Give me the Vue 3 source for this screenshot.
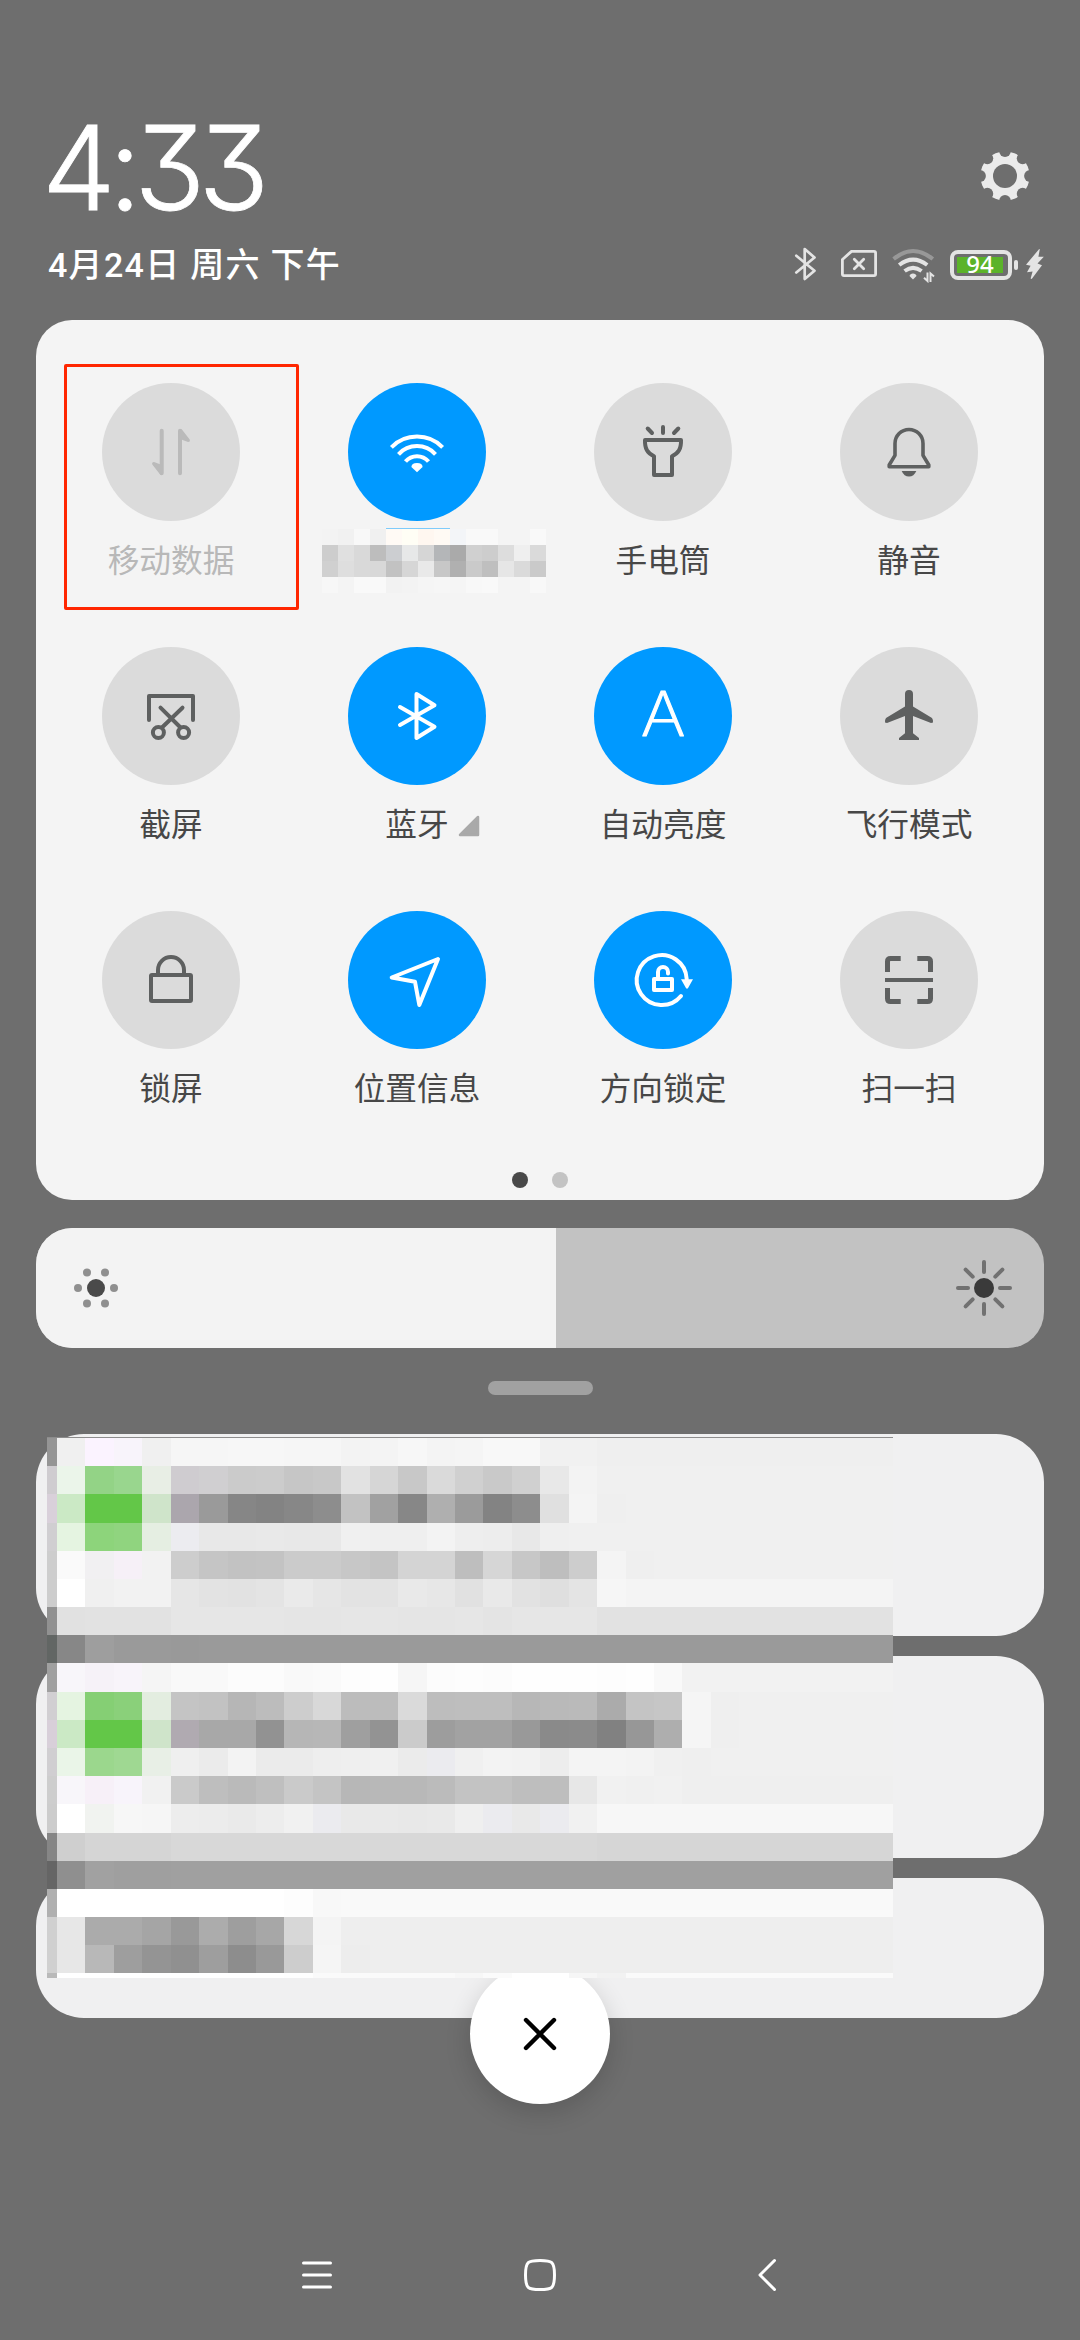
<script setup>
const tiles = [
  { id: 'data', label: '移动数据', state: 'disabled' },
  { id: 'wifi', label: '', state: 'on' },
  { id: 'torch', label: '手电筒', state: 'off' },
  { id: 'mute', label: '静音', state: 'off' },
  { id: 'shot', label: '截屏', state: 'off' },
  { id: 'bt', label: '蓝牙', state: 'on', more: true },
  { id: 'auto', label: '自动亮度', state: 'on' },
  { id: 'plane', label: '飞行模式', state: 'off' },
  { id: 'lock', label: '锁屏', state: 'off' },
  { id: 'loc', label: '位置信息', state: 'on' },
  { id: 'rotate', label: '方向锁定', state: 'on' },
  { id: 'scan', label: '扫一扫', state: 'off' },
]

// Two hex digits stand for a grey, six for a full colour.
const hue = (c) => '#' + (c.length === 2 ? c + c + c : c)

const nameRows = [
  'f3 f1 f8 f0 fffaf5 fffef5 fff7f0 fffaf4 f3f5f8 f9 f9 f4 f4 f9',
  'cd e0 d9 bd ccced1 e7e8e8 d6 b4b6b8 aa d0 cd dd ef da',
  'd0 de d9 d8 c2 d6 e9 c7 b0 ca bf e6 da ca',
  'f7 f4 f9 f9 f2 f3 f5 f6 f5 f8 f9 f4 f4 f8',
].map((r) => r.split(' ').map(hue))
const nameCells = nameRows.flatMap((r, y) => r.map((c, x) => ({ x: x * 16, y: 1 + y * 16, c })))

// First value of each row is the narrow left edge; the last one fills to the right.
const noteRows = [
  '95 f0 fbf3ff f8f4fb f0 f6 f6 f7 f7 f6 f6 f3 f4 f7 f4 f5 f8 f8 f1 f1 ef',
  'cfccd0 ebf5ea 93d386 99d68e e8eee5 cfccd0 d0cfd1 cb cc c6 c8 e2 d6 c8 da d0 c9 d0 e8 f3 f0',
  'd9d0da cbe9c5 63c748 63c748 cfe4ca aba6ad 9a 86 83 87 8d c2 a1 87 af 9b 83 8d e0 f4 ef f0',
  'd0ced1 e5f4e1 8dd47b 90d47f e5eee2 ececf0 e8 e8 e9 e8 e8 f0 ef ef f3 ee ed e8 ef f0',
  'cd fa f1f0f2 f6f0f7 f2 cd c5 c2 c3 cb cb c7 c4 d4 d4 be d6 c7 be cd f4 ef f0',
  'cd ff f0 f2 f2 e6 e3 e2 e4 ea e6 e3 e3 e9 e7 e1 e9 e2 df e4 f6 f4',
  '91 e1 e2 e2 e2 e6 e6 e6 e6 e5 e5 e6 e6 e5 e5 e6 e4 e6 e6 e6 e2',
  '626664 87 9e 9a 9a 99 9a',
  'a0 f8f6fa f6f2f8 f8f4fa f5 f9 f9 fc fc f9 fa fd fe f6 fc fd fc fe fe fe fd fe f9 f2',
  'd1cfd2 e5f4e1 85cf74 8ad07a e3ede0 c4 c2 b6 bc cd d8 bc bc da bd be be b7 b9 ba ab c4 c6 f5 ef f0',
  'd8cfd9 cbe9c5 63c748 63c748 cfe4ca b0aab1 a8 a8 92 b6 b7 9f 93 cb 9d a2 a2 99 8a 8b 81 97 ae f5 ef f0',
  'd0ced1 eaf5e8 9bd78d 9fd892 e8efe6 ef eb f3 eb eb ee ef f0 eb ebebef f0 f3 f2 ed f4 f4 f3 f0 ef f0',
  'cd f8f6fa f7f0f8 f8f4fb f1 ca be ba bf ca c4 b7 b8 b8 bb c3 c3 be be e7 f1 f0 f1 ef',
  'cc ff f1f3f0 f7 f6 ed ec ea ed f1 ebebef e9 e9 e8 e9 ef ebebef e9 ebebef f1 f7',
  '86 cf d5 d5 d5 d8 d8 d8 d8 d8 d8 d8 d8 d8 d8 d8 d8 d8 d8 d8 d6',
  '65 8f a1 9f 9f a0',
  'b0 ff ff ff ff ff ff ff ff fd f8 f9',
  'd0 e7 ab ab a5 99 ac 9e a7 d7 f4 ee',
  'd0 e7 b8 9e 94 90 9e 8d 99 cd f5 ed ee',
  'b9 ff ff ff ff ff ff ff ff fe fa fa fa fa fa f7 fb ff ff f6 f2 fa',
].map((r) => r.split(' ').map(hue))
const colX = (i) => (i === 0 ? 0 : Math.round(10 + (i - 1) * 28.43))
const rowY = (i) => (i === 20 ? 541 : Math.round(1 + i * 28.18))
const noteCells = noteRows.flatMap((r, y) =>
  r.map((c, x) => ({
    x: colX(x),
    y: rowY(y),
    w: (x === r.length - 1 ? 846 : colX(x + 1)) - colX(x),
    h: rowY(y + 1) - rowY(y),
    c,
  })),
)
const turns = [0, 45, 90, 135, 180, 225, 270, 315]
</script>

<template>
  <main class="shade">
    <header class="head">
      <div class="head-row">
        <div class="clock">4:33</div>
        <svg class="gear" viewBox="-25 -25 50 50">
          <mask id="gear-cut">
            <rect x="-25" y="-25" width="50" height="50" fill="#fff" />
            <circle r="12" fill="#000" />
            <circle v-for="t in turns" :key="t" cy="-25" r="5.9" fill="#000" :transform="`rotate(${t})`" />
          </mask>
          <circle r="24.6" fill="#ebebeb" mask="url(#gear-cut)" />
        </svg>
      </div>
      <div class="head-row second">
        <div class="date">4月24日 周六 下午</div>
        <div class="status">
          <svg width="24" height="36" viewBox="0 0 24 36" fill="none" stroke="#e4e4e4" stroke-width="2.7" stroke-linejoin="round" stroke-linecap="round">
            <path d="M3.3 8.7 21.5 23.7 11.7 32V2L21.5 10.5 3.3 25.5" />
          </svg>
          <svg class="sim" width="36" height="36" viewBox="0 0 36 36" fill="none" stroke="#e4e4e4" stroke-width="2.8" stroke-linejoin="round" stroke-linecap="round">
            <path d="M10.5 4.4H33Q34.6 4.4 34.6 6V27Q34.6 28.6 33 28.6H3Q1.4 28.6 1.4 27V12.5Z" />
            <path d="M13.3 12.3 22.7 21.7M22.7 12.3 13.3 21.7" />
          </svg>
          <svg class="net" width="43" height="36" viewBox="0 0 43 36" fill="none" stroke="#e4e4e4" stroke-width="4">
            <path d="M1.6 12Q21 -4 40.8 12" stroke="#989898" />
            <path d="M7.2 18Q21 7.2 35.2 18" />
            <path d="M12.6 24Q21 17.8 29.6 24" />
            <path d="M17.5 29Q18 26.5 21 26.5T24.5 29L21 32.5Z" fill="#e4e4e4" stroke="none" />
            <path d="M35.5 25.5V34L32 30.8M38.5 35V26.5L42 29.5" stroke-width="2" />
          </svg>
          <div class="battery">
            <div class="cell">94</div>
          </div>
          <div class="nub"></div>
          <svg class="bolt" width="20" height="36" viewBox="0 0 20 36" fill="#e4e4e4">
            <path d="M14.2 2 1 17.7 5.6 18.7 2 25.3 7.6 24.4 5.6 31.6 6.7 32 17 18.3 12.5 16.5 18.8 9.7 13.4 9.7 14.8 2.3Z" />
          </svg>
        </div>
      </div>
    </header>

    <section class="panel">
      <div class="grid">
        <div v-for="t in tiles" :key="t.id" class="tile" :class="t.state">
          <div class="disc">
            <svg class="icon" viewBox="-30 -30 60 60">
              <template v-if="t.id === 'data'">
                <path d="M-9.3 -21.3V21.3M9 -21.3V21.3" />
                <path class="solid" d="M-10.5 23 -18.7 12.5Q-19.5 10 -17 10L-9 13V21ZM10.5 -23 18.7 -12.5Q19.5 -10 17 -10L9 -13V-21Z" />
              </template>
              <template v-else-if="t.id === 'wifi'">
                <path class="butt" d="M-25.6 -4.7A36 36 0 0 1 25.6 -4.7M-18.5 2.3A25 25 0 0 1 18.5 2.3M-11.5 9.5A15 15 0 0 1 11.5 9.5" />
                <path class="solid" d="M-5.6 15Q-5.5 11 0 11T5.6 15L0 20.3Z" />
              </template>
              <template v-else-if="t.id === 'torch'">
                <path d="M-18 -12H18C18.3 -3 15.5 1 9 4.3V23H-9V4.3C-15.5 1 -18.3 -3 -18 -12ZM0 -25V-19M-15.3 -23.5 -11 -19M15.3 -23.5 11 -19" />
              </template>
              <template v-else-if="t.id === 'mute'">
                <path class="thin" d="M-14 -8.5A14 14 0 0 1 14 -8.5V3.3L19.8 13V14.7H-19.8V13L-14 3.3Z" />
                <path class="solid" d="M-7.3 19H7.3Q5 24.6 0 24.6T-7.3 19Z" />
              </template>
              <template v-else-if="t.id === 'shot'">
                <path d="M-22 4V-20H22V4M-10.5 -8.3 9 11M11.5 -8.3 -8.5 11" />
                <circle cx="-12.6" cy="16.5" r="5.5" />
                <circle cx="12.6" cy="16.5" r="5.5" />
              </template>
              <template v-else-if="t.id === 'bt'">
                <path d="M-17 -9 17.5 10.7 -.5 22V-22L17.5 -10.7 -17 9" />
              </template>
              <template v-else-if="t.id === 'auto'">
                <text class="letter" x="0" y="20" text-anchor="middle" transform="scale(1.1 1)">A</text>
              </template>
              <template v-else-if="t.id === 'plane'">
                <path class="solid" d="M-4 -22A4 4 0 0 1 4 -22V-9.5L23 2Q24.3 3.5 24 6.5L22 7 4 0V17.3L10 22V24H-10V22L-4 17.3V0L-22 7 -24 6.5Q-24.3 3.5 -23 2L-4 -9.5Z" />
              </template>
              <template v-else-if="t.id === 'lock'">
                <rect x="-20" y="-5" width="40" height="26" rx="1" />
                <path class="butt" d="M-13 -6V-10A13 13 0 0 1 13 -10V-6" />
              </template>
              <template v-else-if="t.id === 'loc'">
                <path d="M21 -21 -25.3 -2.5 -2 1.8 2.3 25Z" />
              </template>
              <template v-else-if="t.id === 'rotate'">
                <path d="M18 16A25 25 0 1 1 23.7 -1M-9 -1H9V10H-9ZM-5 -2V-8A5 5 0 0 1 5 -8V-6.5" />
                <path class="solid" d="M18 -.8H30L24.8 8.6H23.2Z" />
              </template>
              <template v-else>
                <path class="corners" d="M-21.5 -8V-18.5Q-21.5 -21.5 -18.5 -21.5H-8.3M8.3 -21.5H18.5Q21.5 -21.5 21.5 -18.5V-8M21.5 8V18.5Q21.5 21.5 18.5 21.5H8.3M-8.3 21.5H-18.5Q-21.5 21.5 -21.5 18.5V8" />
                <path class="butt" d="M-24 0H24" />
              </template>
            </svg>
          </div>
          <svg v-if="t.id === 'wifi'" class="masked-name" width="224" height="65" shape-rendering="crispEdges">
            <path d="M64 0H128V1H64Z" fill="#7ecbfb" />
            <rect v-for="(c, i) in nameCells" :key="i" :x="c.x" :y="c.y" width="16" height="16" :fill="c.c" />
          </svg>
          <div v-else class="label">
            {{ t.label }}
            <svg v-if="t.more" class="more" width="22" height="22" viewBox="0 0 22 22">
              <path d="M2 20 20 2V20Z" fill="#a9a9a9" stroke="#a9a9a9" stroke-width="2.5" stroke-linejoin="round" />
            </svg>
          </div>
          <div v-if="t.id === 'data'" class="marker"></div>
        </div>
      </div>
      <div class="pages"><i class="current"></i><i></i></div>
    </section>

    <section class="slider">
      <div class="level">
        <svg width="60" height="60" viewBox="-30 -30 60 60">
          <circle r="9" fill="#4a4a4a" />
          <g fill="#8f8f8f">
            <circle cx="-18" r="4" /><circle cx="18" r="4" />
            <circle cx="-9" cy="-15.5" r="4" /><circle cx="9" cy="-15.5" r="4" />
            <circle cx="-9" cy="15.5" r="4" /><circle cx="9" cy="15.5" r="4" />
          </g>
        </svg>
      </div>
      <svg width="60" height="60" viewBox="-30 -30 60 60">
        <circle r="10" fill="#3a3a3a" />
        <path v-for="t in turns" :key="t" d="M0 -26V-16" stroke="#717171" stroke-width="4" stroke-linecap="round" :transform="`rotate(${t})`" />
      </svg>
    </section>
    <div class="handle"></div>

    <section class="notes">
      <div class="card"></div>
      <div class="card"></div>
      <div class="card short"></div>
      <button class="close" aria-label="clear">
        <svg width="40" height="40" viewBox="-20 -20 40 40" fill="none" stroke="#000" stroke-width="4.4" stroke-linecap="round">
          <path d="M-14 -14 14 14M14 -14 -14 14" />
        </svg>
      </button>
      <svg class="masked" width="846" height="541" shape-rendering="crispEdges">
        <rect x="0" y="0" width="846" height="1" fill="#8c8c8c" />
        <rect v-for="(c, i) in noteCells" :key="i" :x="c.x" :y="c.y" :width="c.w" :height="c.h" :fill="c.c" />
      </svg>
    </section>

    <nav class="nav">
      <svg viewBox="-20 -20 40 40"><path d="M-10.5 -12H16.5M-10.5 0H16.5M-10.5 12H16.5" /></svg>
      <svg viewBox="-20 -20 40 40"><path d="M0 -14.5C12 -14.5 14.5 -13.5 14.5 0S12 14.5 0 14.5 -14.5 13.5 -14.5 0 -12 -14.5 0 -14.5Z" /></svg>
      <svg viewBox="-20 -20 40 40"><path d="M8.5 -14.5 -6 0 8.5 14.5" /></svg>
    </nav>
  </main>
</template>

<style>
body {
  margin: 0;
  background: #6e6e6e;
}
</style>

<style scoped>
.shade {
  box-sizing: border-box;
  width: 1080px;
  height: 2340px;
  display: flex;
  flex-direction: column;
  overflow: hidden;
  background: #6e6e6e;
  font-family: Roboto, "Noto Sans CJK SC", sans-serif;
}
.shade svg { display: block; flex: none; }
.head {
  box-sizing: border-box;
  height: 320px;
  padding: 106px 35px 0 48px;
}
.head-row {
  display: flex;
  justify-content: space-between;
  height: 120px;
}
.head-row.second { height: 78px; align-items: center; }
.clock {
  height: 120px;
  margin-left: -6px;
  line-height: 123px;
  font-family: Inter, sans-serif;
  font-size: 117px;
  font-weight: 300;
  font-feature-settings: "cv09";
  letter-spacing: -7.2px;
  -webkit-text-stroke: .8px #fff;
  color: #fff;
}
.gear { width: 50px; height: 50px; margin: 45px 15px 0 0; }
.date {
  font-size: 34px;
  line-height: 50px;
  font-weight: 500;
  letter-spacing: 1.3px;
  color: #fff;
  white-space: nowrap;
}
.status { display: flex; align-items: center; }
.sim { margin-left: 24px; }
.net { margin-left: 15px; }
.battery {
  box-sizing: border-box;
  width: 62px;
  height: 30px;
  margin-left: 15px;
  padding: 3px;
  border: 4px solid #e4e4e4;
  border-radius: 8px;
}
.cell {
  width: 46px;
  height: 16px;
  line-height: 14px;
  background: #5bb329;
  color: #fff;
  text-align: center;
  font-family: "Noto Sans", sans-serif;
  font-size: 24px;
  font-weight: 500;
}
.nub { width: 4px; height: 10px; margin-left: 2px; border-radius: 2px; background: #e4e4e4; }
.bolt { margin-left: 7px; }

.panel {
  box-sizing: border-box;
  width: 1008px;
  height: 880px;
  margin: 0 36px;
  padding: 63px 12px 0;
  border-radius: 36px;
  background: #f4f4f4;
}
.grid {
  display: grid;
  grid-template-columns: repeat(4, 246px);
  grid-auto-rows: 264px;
}
.tile {
  position: relative;
  display: flex;
  flex-direction: column;
  align-items: center;
  color: #5e6060;
}
.disc {
  display: flex;
  align-items: center;
  justify-content: center;
  width: 138px;
  height: 138px;
  border-radius: 50%;
  background: #dbdbdb;
}
.on { color: #fff; }
.on .disc { background: #0099ff; }
.disabled { color: #bababa; }
.icon {
  width: 60px;
  height: 60px;
  overflow: visible;
  fill: none;
  stroke: currentColor;
  stroke-width: 4;
  stroke-linecap: round;
  stroke-linejoin: round;
}
.icon .solid { fill: currentColor; stroke: none; }
.icon .thin { stroke-width: 3.6; }
.icon .butt { stroke-linecap: butt; }
.icon .corners { stroke-width: 5; stroke-linecap: butt; }
.letter {
  font-family: Inter, sans-serif;
  font-size: 62px;
  font-weight: 200;
  fill: currentColor;
  stroke-width: 1;
}
.label {
  position: relative;
  margin-top: 18px;
  font-size: 31.7px;
  line-height: 46px;
  color: #474747;
  white-space: nowrap;
}
.disabled .label { color: #b8b8b8; }
.more { position: absolute; left: 73px; top: 12px; }
.masked-name { margin-top: 7px; transform: translateX(17px); }
.marker {
  position: absolute;
  left: 16px;
  top: -19px;
  width: 229px;
  height: 240px;
  border: 3px solid #ff2600;
  border-radius: 2px;
}
.pages { display: flex; justify-content: center; gap: 24px; margin-top: -3px; }
.pages i { width: 16px; height: 16px; border-radius: 50%; background: #c3c3c3; }
.pages .current { background: #484848; }

.slider {
  box-sizing: border-box;
  display: flex;
  justify-content: space-between;
  align-items: center;
  width: 1008px;
  height: 120px;
  margin: 28px 36px 0;
  padding-right: 30px;
  border-radius: 36px;
  overflow: hidden;
  background: #c2c2c2;
}
.level {
  box-sizing: border-box;
  display: flex;
  align-items: center;
  width: 520px;
  height: 120px;
  padding-left: 30px;
  background: #f3f3f3;
}
.handle {
  width: 105px;
  height: 14px;
  margin: 33px auto 0;
  border-radius: 7px;
  background: #a1a1a1;
}
.notes {
  position: relative;
  display: flex;
  flex-direction: column;
  gap: 20px;
  margin: 39px 36px 0;
}
.card { height: 202px; border-radius: 48px; background: #f0f0f1; }
.card.short { height: 140px; }
.close {
  position: absolute;
  left: 434px;
  top: 530px;
  display: flex;
  align-items: center;
  justify-content: center;
  width: 140px;
  height: 140px;
  padding: 0;
  border: 0;
  border-radius: 50%;
  background: #fff;
  box-shadow: 0 8px 26px rgba(0, 0, 0, .16);
}
.masked { position: absolute; left: 11px; top: 3px; }
.nav {
  display: flex;
  justify-content: center;
  gap: 186px;
  margin-top: 237px;
}
.nav svg {
  width: 40px;
  height: 40px;
  fill: none;
  stroke: #fff;
  stroke-width: 3;
  stroke-linecap: round;
  stroke-linejoin: round;
}
</style>
